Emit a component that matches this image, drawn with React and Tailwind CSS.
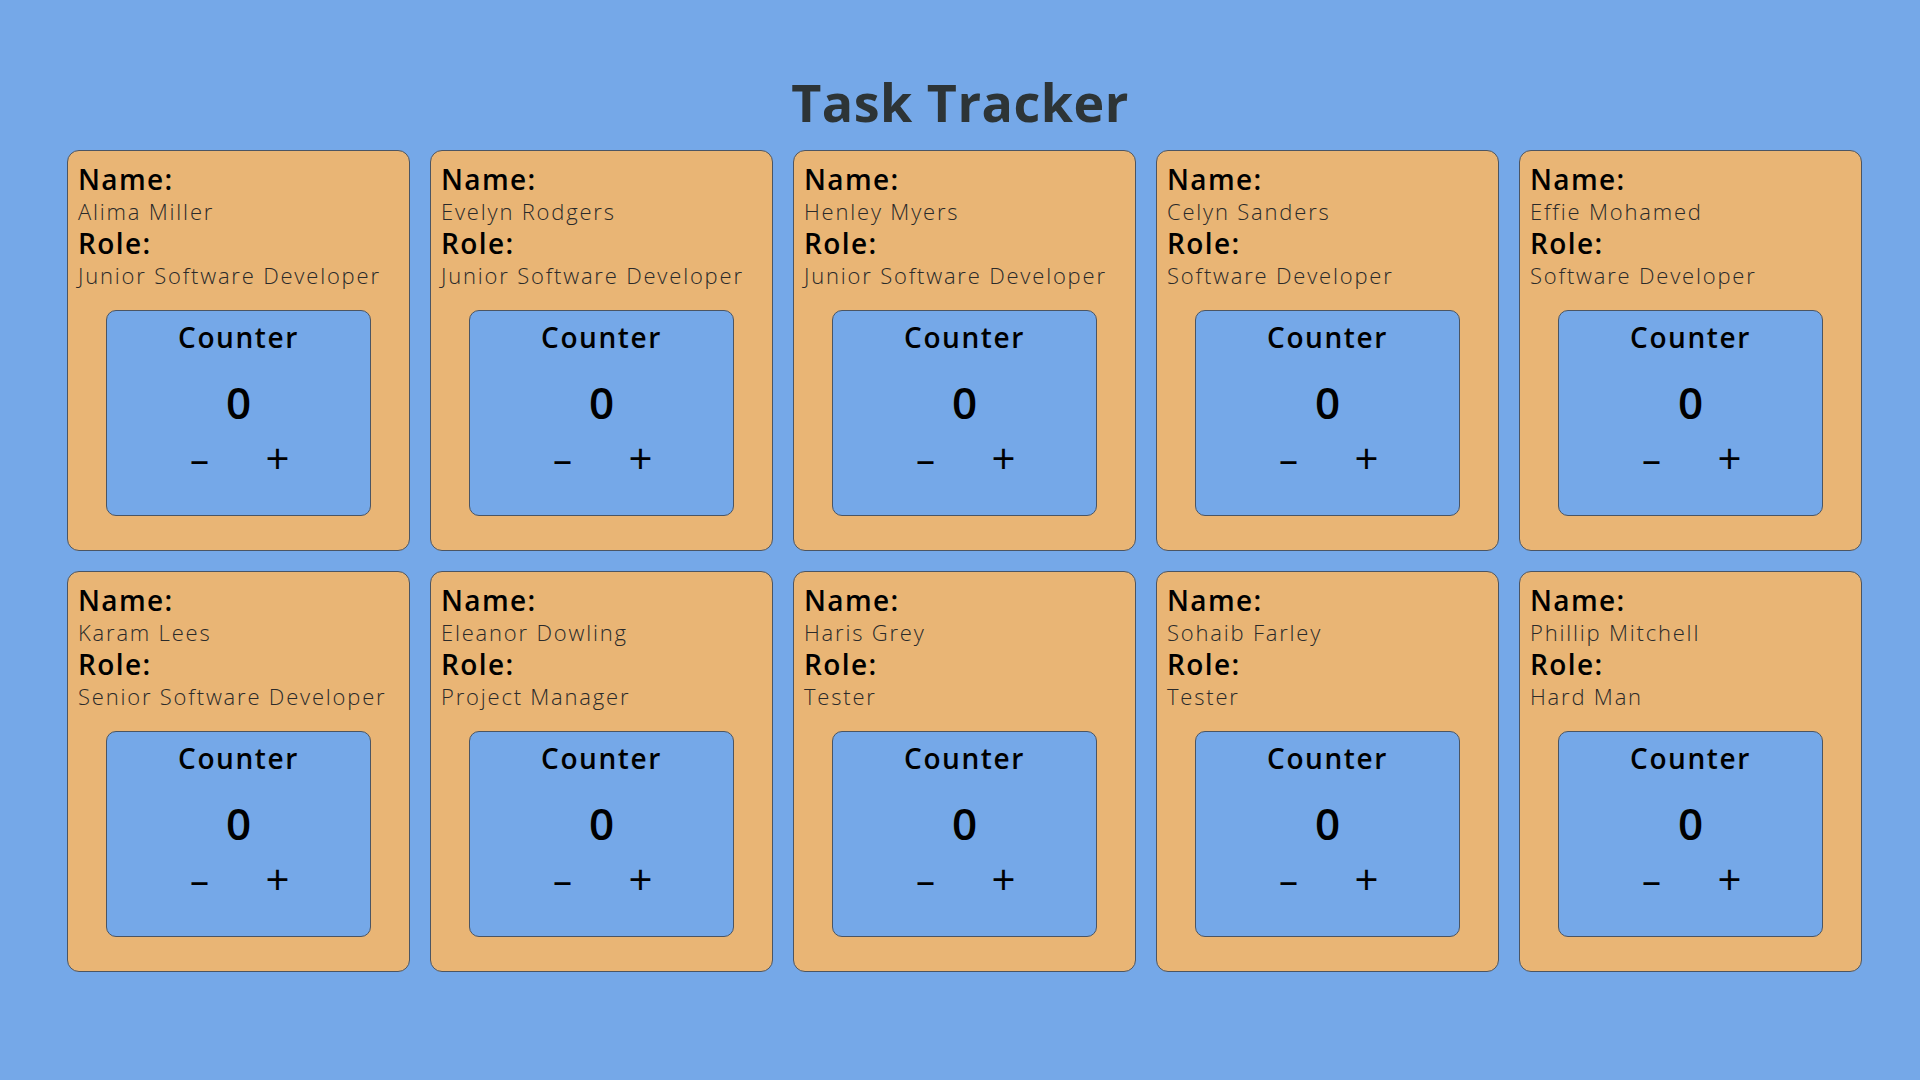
import React, { useState } from 'react';

const employees = [
  { name: 'Alima Miller', role: 'Junior Software Developer' },
  { name: 'Evelyn Rodgers', role: 'Junior Software Developer' },
  { name: 'Henley Myers', role: 'Junior Software Developer' },
  { name: 'Celyn Sanders', role: 'Software Developer' },
  { name: 'Effie Mohamed', role: 'Software Developer' },
  { name: 'Karam Lees', role: 'Senior Software Developer' },
  { name: 'Eleanor Dowling', role: 'Project Manager' },
  { name: 'Haris Grey', role: 'Tester' },
  { name: 'Sohaib Farley', role: 'Tester' },
  { name: 'Phillip Mitchell', role: 'Hard Man' },
];

const Counter = () => {
  const [count, setCount] = useState(0);

  return (
    <div className="mx-auto mt-[19px] w-[265px] h-[206px] rounded-[10px] border border-[#4b5563] bg-[#75a8e8] pt-[10px] text-center text-black">
      <h3 className="text-[28px] leading-[32px] font-semibold tracking-[1.6px]">Counter</h3>
      <p className="mt-[25px] text-[44px] leading-[48px] font-semibold">{count}</p>
      <div className="mt-[12px] flex justify-center gap-[38px]">
        <button onClick={() => setCount(count - 1)} className="w-[40px] text-[38px] leading-[40px]">
          –
        </button>
        <button onClick={() => setCount(count + 1)} className="w-[40px] text-[42px] leading-[40px]">
          +
        </button>
      </div>
    </div>
  );
};

const EmployeeCard = ({ employee }) => (
  <div className="h-[401px] rounded-[12px] border border-[#4b5563] bg-[#e9b575] px-[10px] pt-[12px]">
    <p className="text-[28px] leading-[32px] font-semibold text-black tracking-[1.4px]">Name:</p>
    <p className="text-[22px] leading-[32px] font-light text-[#2a2a2a] tracking-[1.8px]">{employee.name}</p>
    <p className="text-[28px] leading-[32px] font-semibold text-black tracking-[1.4px]">Role:</p>
    <p className="text-[22px] leading-[32px] font-light text-[#2a2a2a] tracking-[1.8px] whitespace-nowrap">{employee.role}</p>
    <Counter />
  </div>
);

export default function App() {
  return (
    <div className="min-h-screen bg-[#75a8e8] pt-[70px] font-['Open_Sans',sans-serif]">
      <h1 className="text-center text-[52px] leading-[64px] font-bold text-[#2d3436] tracking-[0.5px]">Task Tracker</h1>
      <div className="mt-[16px] ml-[67px] grid w-[1795px] grid-cols-5 gap-x-[20px] gap-y-[20px]">
        {employees.map((employee, index) => (
          <EmployeeCard key={index} employee={employee} />
        ))}
      </div>
    </div>
  );
}
